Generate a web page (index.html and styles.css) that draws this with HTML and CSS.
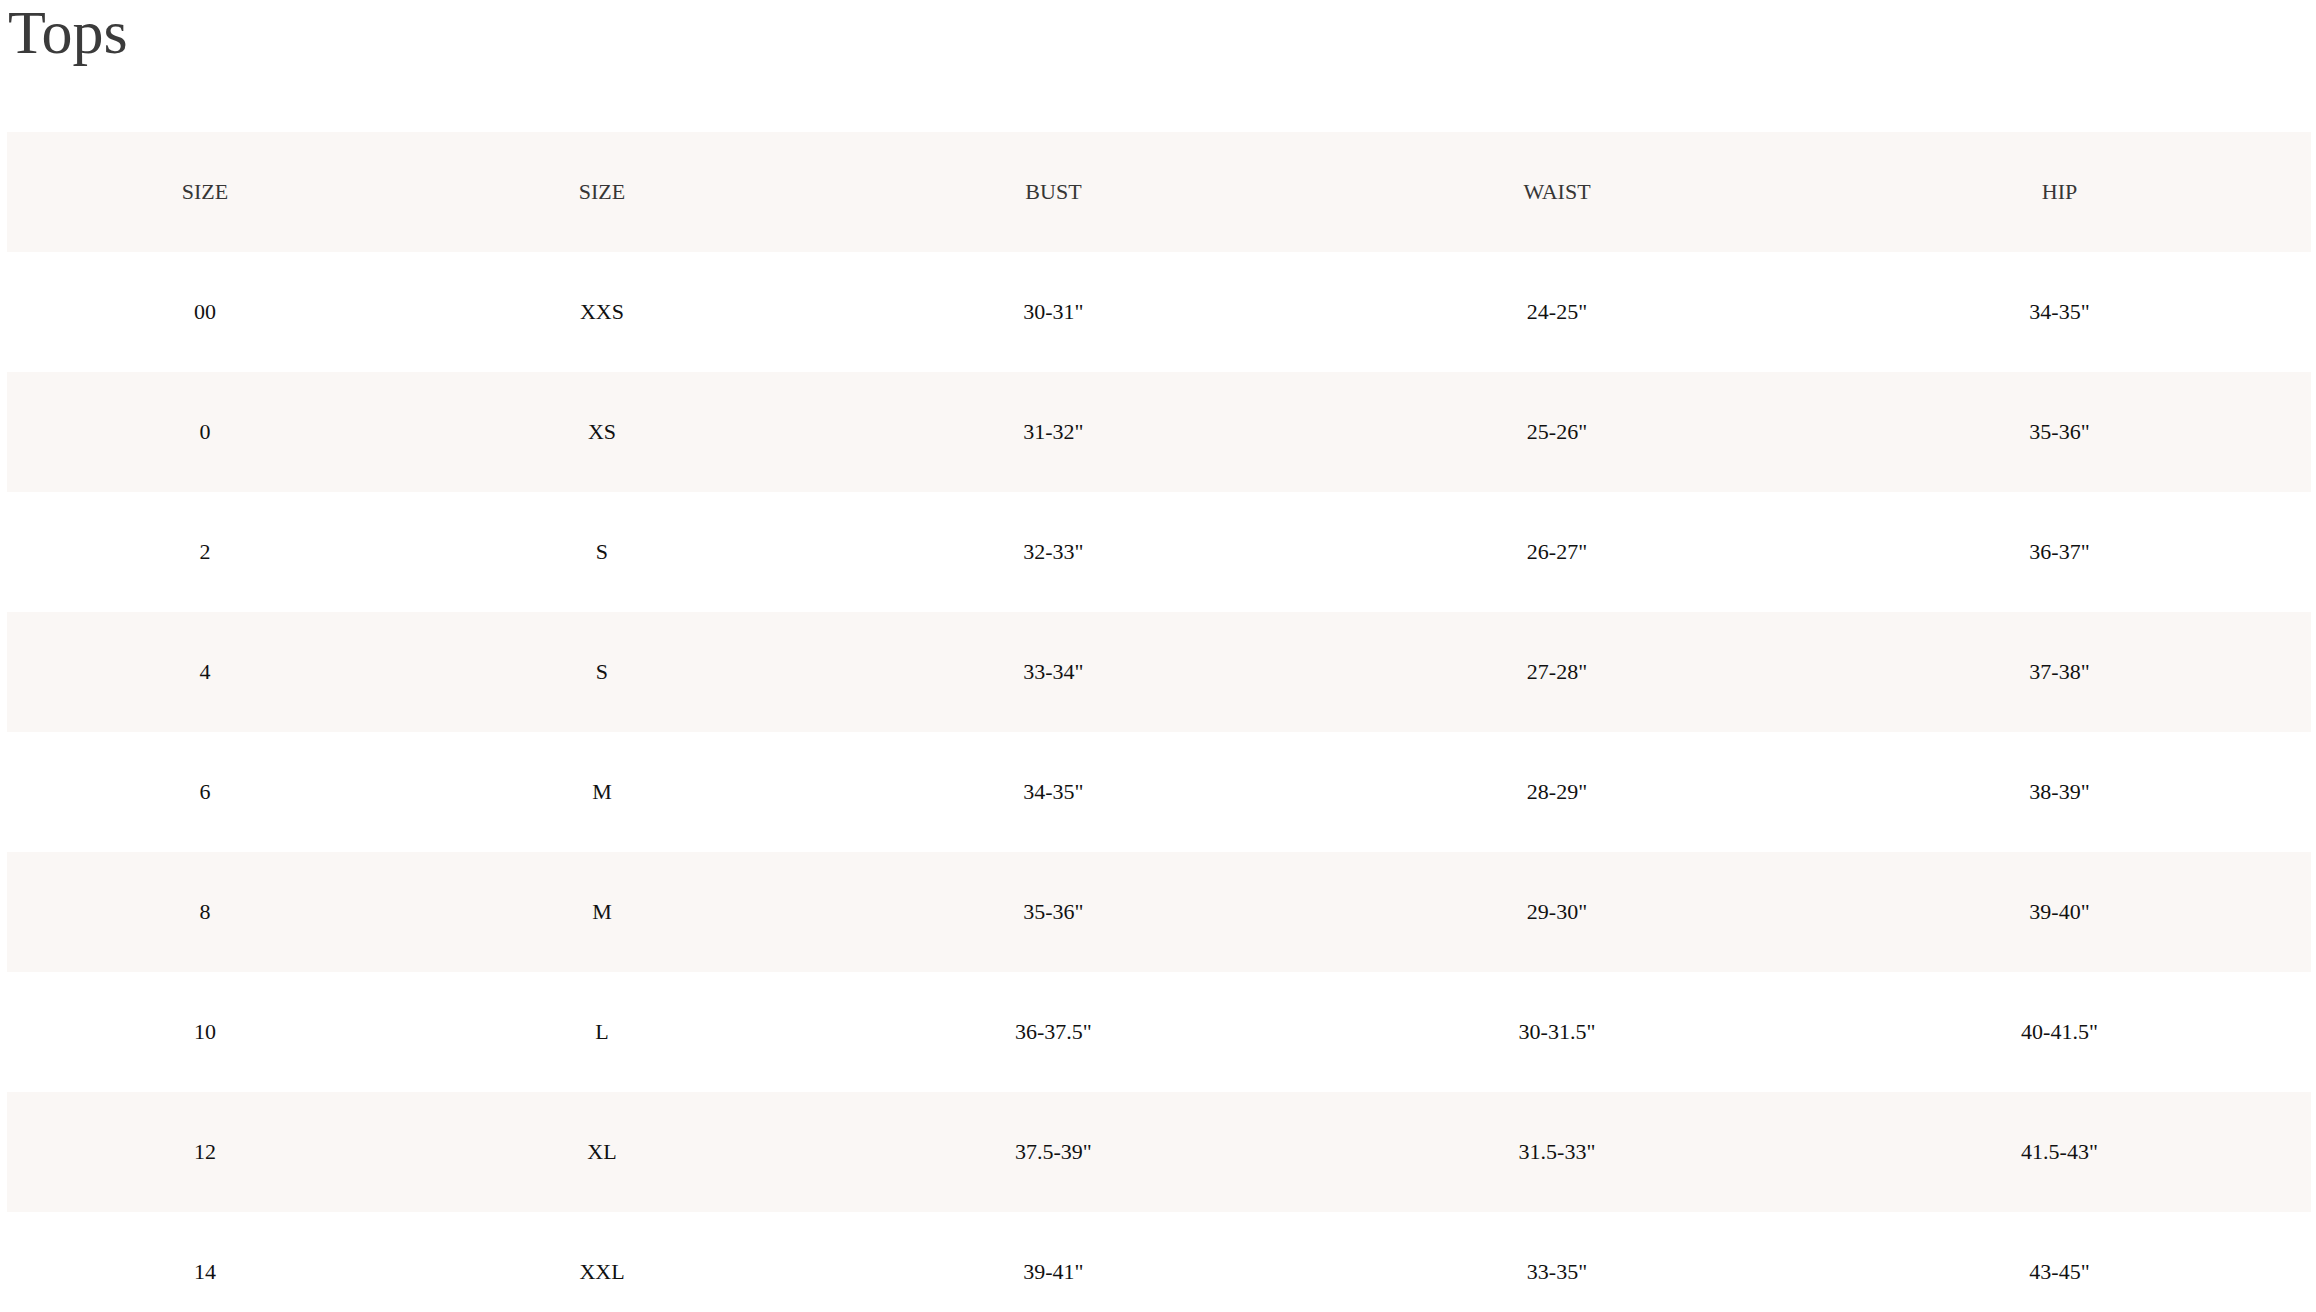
FILE: index.html
```html
<!DOCTYPE html>
<html lang="en">
<head>
<meta charset="utf-8">
<title>Tops</title>
<link rel="stylesheet" href="styles.css">
</head>
<body>
<div class="page">
  <h1 class="title">Tops</h1>
  <table class="size-table">
    <colgroup>
      <col class="c1"><col class="c2"><col class="c3"><col class="c4"><col class="c5">
    </colgroup>
    <thead>
      <tr class="head-row">
        <th>SIZE</th><th>SIZE</th><th>BUST</th><th>WAIST</th><th>HIP</th>
      </tr>
    </thead>
    <tbody>
      <tr><td>00</td><td>XXS</td><td>30-31"</td><td>24-25"</td><td>34-35"</td></tr>
      <tr class="shade"><td>0</td><td>XS</td><td>31-32"</td><td>25-26"</td><td>35-36"</td></tr>
      <tr><td>2</td><td>S</td><td>32-33"</td><td>26-27"</td><td>36-37"</td></tr>
      <tr class="shade"><td>4</td><td>S</td><td>33-34"</td><td>27-28"</td><td>37-38"</td></tr>
      <tr><td>6</td><td>M</td><td>34-35"</td><td>28-29"</td><td>38-39"</td></tr>
      <tr class="shade"><td>8</td><td>M</td><td>35-36"</td><td>29-30"</td><td>39-40"</td></tr>
      <tr><td>10</td><td>L</td><td>36-37.5"</td><td>30-31.5"</td><td>40-41.5"</td></tr>
      <tr class="shade"><td>12</td><td>XL</td><td>37.5-39"</td><td>31.5-33"</td><td>41.5-43"</td></tr>
      <tr><td>14</td><td>XXL</td><td>39-41"</td><td>33-35"</td><td>43-45"</td></tr>
    </tbody>
  </table>
</div>
</body>
</html>
```
FILE: styles.css
```css
html, body {
  margin: 0;
  padding: 0;
  background: #ffffff;
}

.page {
  padding: 0 5px 0 7px;
  font-family: "Liberation Serif", "Times New Roman", serif;
}

.title {
  margin: 0 0 67px 1px;
  font-size: 62px;
  font-weight: normal;
  line-height: 65px;
  color: #3b3b3b;
}

.size-table {
  width: 100%;
  border-collapse: collapse;
  border-spacing: 0;
  table-layout: fixed;
}

.c1 { width: 17.19%; }
.c2 { width: 17.27%; }
.c3 { width: 21.92%; }
.c4 { width: 21.79%; }
.c5 { width: 21.83%; }

.size-table th,
.size-table td {
  height: 120px;
  padding: 0;
  text-align: center;
  vertical-align: middle;
  font-size: 22px;
  font-weight: normal;
}

.size-table th {
  color: #363636;
}

.size-table td {
  color: #111111;
}

.head-row,
.shade {
  background: #faf7f5;
}
```
